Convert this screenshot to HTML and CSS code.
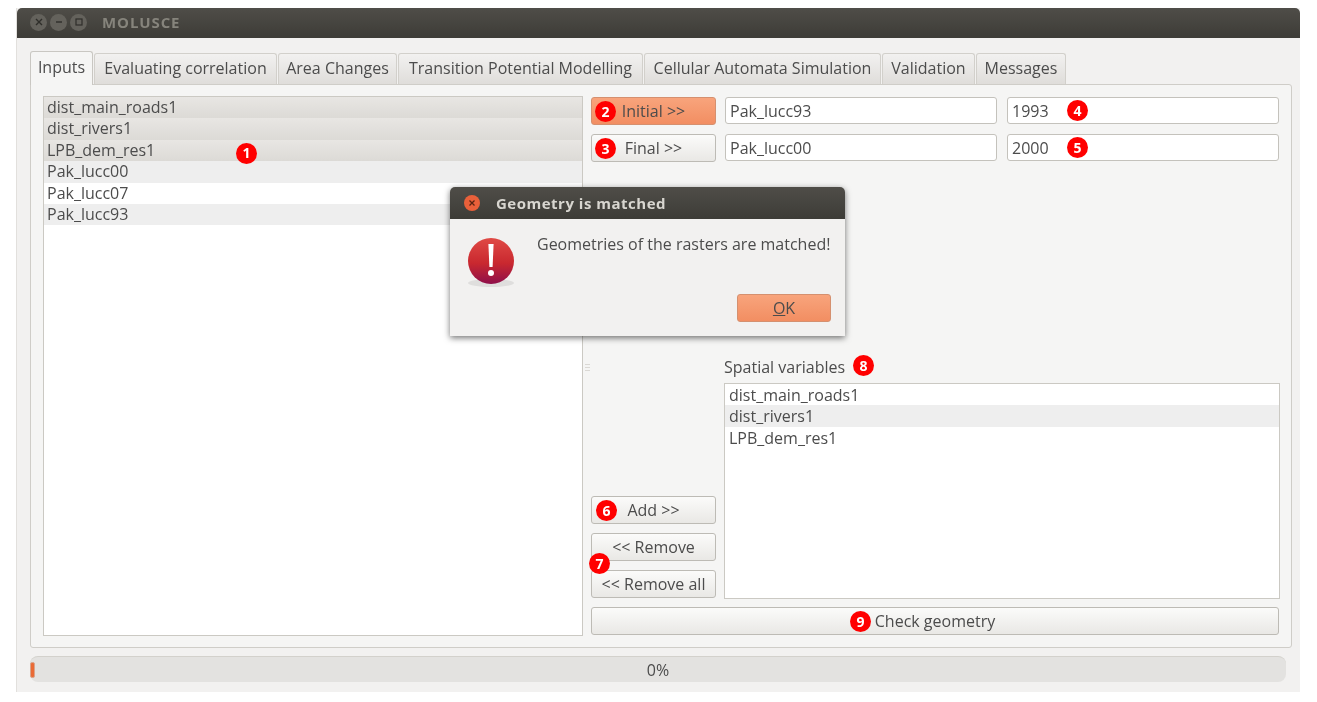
FILE: index.html
```html
<!DOCTYPE html>
<html lang="en">
<head>
  <meta charset="UTF-8">
  <title>MOLUSCE</title>
  <link rel="stylesheet" href="styles.css">
</head>
<body>
  <div class="window">
    <div class="titlebar">
      <span class="wbtn"><svg width="8" height="8" viewBox="0 0 8 8"><path d="M1 1L7 7M7 1L1 7" stroke="#2f2e2a" stroke-width="1.4"/></svg></span>
      <span class="wbtn"><svg width="8" height="8" viewBox="0 0 8 8"><path d="M1 4H7" stroke="#2f2e2a" stroke-width="1.4"/></svg></span>
      <span class="wbtn"><svg width="8" height="8" viewBox="0 0 8 8"><rect x="1" y="1" width="6" height="6" fill="none" stroke="#2f2e2a" stroke-width="1.2"/></svg></span>
      <span class="wtitle">MOLUSCE</span>
    </div>

    <div class="content">
      <div class="tabs">
        <div class="tab active tab-inputs">Inputs</div>
        <div class="tab tab-corr">Evaluating correlation</div>
        <div class="tab tab-area">Area Changes</div>
        <div class="tab tab-trans">Transition Potential Modelling</div>
        <div class="tab tab-ca">Cellular Automata Simulation</div>
        <div class="tab tab-valid">Validation</div>
        <div class="tab tab-msg">Messages</div>
      </div>

      <div class="pane">
        <div class="list layers">
          <div class="row sel">dist_main_roads1</div>
          <div class="row sel">dist_rivers1</div>
          <div class="row sel">LPB_dem_res1<span class="badge b1">1</span></div>
          <div class="row alt">Pak_lucc00</div>
          <div class="row">Pak_lucc07</div>
          <div class="row alt">Pak_lucc93</div>
        </div>

        <div class="grip"><span class="grip-dots"></span></div>

        <div class="right">
          <div class="pick">
            <button class="btn hot"><span class="badge b2">2</span>Initial &gt;&gt;</button>
            <div class="field">Pak_lucc93</div>
            <div class="field">1993<span class="badge b4">4</span></div>
          </div>
          <div class="pick">
            <button class="btn"><span class="badge b2">3</span>Final &gt;&gt;</button>
            <div class="field">Pak_lucc00</div>
            <div class="field">2000<span class="badge b4">5</span></div>
          </div>

          <div class="vars">
            <div class="var-buttons">
              <button class="btn"><span class="badge b6">6</span>Add &gt;&gt;</button>
              <button class="btn">&lt;&lt; Remove</button>
              <button class="btn">&lt;&lt; Remove all<span class="badge b7">7</span></button>
            </div>
            <div class="var-col">
              <div class="var-label">Spatial variables<span class="badge b8">8</span></div>
              <div class="list var-list">
                <div class="row">dist_main_roads1</div>
                <div class="row alt">dist_rivers1</div>
                <div class="row">LPB_dem_res1</div>
              </div>
            </div>
          </div>

          <button class="btn check"><span class="badge b9">9</span>Check geometry</button>
        </div>
      </div>

      <div class="progress">
        <span class="chunk"></span>
        0%
      </div>
    </div>

    <div class="dialog">
      <div class="dlg-title">
        <span class="dlg-close"><svg width="8" height="8" viewBox="0 0 8 8"><path d="M1.5 1.5L6.5 6.5M6.5 1.5L1.5 6.5" stroke="#5a2412" stroke-width="1.3"/></svg></span>
        <span class="dlg-name">Geometry is matched</span>
      </div>
      <div class="dlg-body">
        <svg class="dlg-icon" width="52" height="54" viewBox="0 0 52 54">
          <defs>
            <linearGradient id="err" x1="0" y1="0" x2="0" y2="1">
              <stop offset="0" stop-color="#e04a45"/>
              <stop offset="0.55" stop-color="#c9282f"/>
              <stop offset="1" stop-color="#8f0f4a"/>
            </linearGradient>
          </defs>
          <ellipse cx="26" cy="47" rx="23" ry="4" fill="#000" opacity="0.08"/>
          <circle cx="26" cy="25" r="23" fill="url(#err)"/>
          <path d="M23.4 8H28.6L27.6 31H24.4Z" fill="#fff"/>
          <circle cx="26" cy="37" r="3" fill="#fff"/>
        </svg>
        <div class="dlg-text">Geometries of the rasters are matched!</div>
      </div>
      <div class="dlg-foot">
        <button class="btn hot ok"><u>O</u>K</button>
      </div>
    </div>
  </div>
</body>
</html>
```

FILE: styles.css
```css
* {
  box-sizing: border-box;
}

body {
  margin: 0;
  background: #fff;
  font-family: "Open Sans", "Noto Sans", sans-serif;
  font-size: 16px;
  color: #4c4c4c;
}

.window {
  position: relative;
  width: 1284px;
  height: 684px;
  margin: 8px 0 0 16px;
  background: #f2f1f0;
  border-left: 1px solid #e2e0dd;
  filter: blur(0.5px);
}

.titlebar {
  display: flex;
  align-items: center;
  height: 30px;
  padding: 0 0 2px 13px;
  gap: 3px;
  background: linear-gradient(#4f4d48, #3d3c37);
  border-radius: 5px 5px 0 0;
}

.wbtn {
  display: flex;
  align-items: center;
  justify-content: center;
  width: 17px;
  height: 17px;
  border-radius: 50%;
  background: #64625c;
}

.wtitle {
  margin: -1px 0 0 12px;
  font-weight: bold;
  font-size: 15px;
  letter-spacing: 0.9px;
  color: #86847c;
}

.content {
  padding: 13px 0 0 13px;
}

.tabs {
  display: flex;
  align-items: flex-end;
  height: 33px;
}

.tab {
  display: flex;
  align-items: center;
  justify-content: center;
  height: 31px;
  margin-right: 1px;
  padding-bottom: 2px;
  background: linear-gradient(#f2f1f0, #dfdddA);
  border: 1px solid #d2d0cb;
  border-bottom: none;
  border-radius: 3px 3px 0 0;
  white-space: nowrap;
}

.tab.active {
  height: 34px;
  margin-bottom: -1px;
  padding-bottom: 3px;
  background: #f5f5f4;
  border-color: #c9c7c2;
  position: relative;
  z-index: 1;
}

.tab-inputs { width: 63px; }
.tab-corr { width: 183px; }
.tab-area { width: 119px; }
.tab-trans { width: 245px; }
.tab-ca { width: 237px; }
.tab-valid { width: 93px; }
.tab-msg { width: 90px; }

.pane {
  display: flex;
  width: 1262px;
  height: 564px;
  padding: 11px 13px 11px 12px;
  background: #f5f5f4;
  border: 1px solid #cfcdc8;
  border-radius: 0 3px 3px 3px;
}

.list {
  background: #fff;
  border: 1px solid #cbc9c3;
}

.layers {
  position: relative;
  flex: none;
  width: 540px;
  height: 540px;
}

.row {
  position: relative;
  height: 21.4px;
  line-height: 21px;
  padding-left: 3px;
  white-space: nowrap;
}

.row.sel {
  background: linear-gradient(#e8e6e3, #dcdad6);
}

.row.alt {
  background: #eeeeee;
}

.var-list .row {
  padding-left: 4px;
  line-height: 22px;
}

.grip {
  display: flex;
  align-items: center;
  justify-content: center;
  flex: none;
  width: 8px;
  padding-top: 2px;
}

.grip-dots {
  width: 5px;
  height: 7px;
  border-top: 1px solid #dad8d4;
  border-bottom: 1px solid #dad8d4;
  background: linear-gradient(#dad8d4, #dad8d4) center / 100% 1px no-repeat;
}

.right {
  display: flex;
  flex-direction: column;
  flex: none;
  width: 688px;
  padding-bottom: 1px;
}

.pick {
  display: flex;
  gap: 10px;
  height: 27px;
  margin-top: 1px;
  margin-bottom: 9px;
}

.pick .btn {
  margin-right: -1px;
}

.btn {
  position: relative;
  display: flex;
  align-items: center;
  justify-content: center;
  flex: none;
  width: 125px;
  height: 28px;
  padding: 0 0 1px;
  background: linear-gradient(#fbfbfa, #e9e8e5);
  border: 1px solid #bdbbb5;
  border-radius: 3px;
  font: inherit;
  color: inherit;
}

.btn.hot {
  background: linear-gradient(#f8a47c, #f28e62);
  border-color: #d5906f;
}

.field {
  position: relative;
  flex: none;
  width: 272px;
  height: 27px;
  line-height: 26px;
  padding-left: 4px;
  background: #fff;
  border: 1px solid #c4c2bc;
  border-radius: 3px;
}

.vars {
  display: flex;
  flex: 1;
  align-items: flex-end;
  gap: 8px;
}

.var-buttons {
  display: flex;
  flex-direction: column;
  gap: 9px;
  padding-bottom: 1px;
}

.var-col {
  flex: 1;
}

.var-label {
  position: relative;
  height: 25px;
  line-height: 18px;
}

.var-list {
  width: 556px;
  height: 216px;
}

.check {
  width: 688px;
  margin-top: 8px;
}

.badge {
  position: absolute;
  display: flex;
  align-items: center;
  justify-content: center;
  width: 21px;
  height: 21px;
  border-radius: 50%;
  background: #f00;
  color: #fff;
  font-weight: bold;
  font-size: 14px;
  line-height: 1;
  z-index: 2;
}

.b1 { left: 192px; top: 3px; }
.b2 { left: 3px; top: 3px; }
.b4 { left: 59px; top: 2px; }
.b6 { left: 4px; top: 3px; }
.b7 { left: -3px; top: -18px; }
.b8 { left: 129px; top: -3px; }
.b9 { left: 258px; top: 3px; }

.progress {
  position: relative;
  display: flex;
  align-items: center;
  justify-content: center;
  width: 1256px;
  height: 26px;
  margin-top: 8px;
  background: #e3e2e0;
  border-top: 1px solid #d3d1cc;
  border-radius: 8px;
}

.chunk {
  position: absolute;
  left: 0;
  top: 5px;
  width: 5px;
  height: 16px;
  background: #ea6a35;
  border: 1px solid #d9a58c;
  border-radius: 2px;
}

.dialog {
  position: absolute;
  left: 433px;
  top: 179px;
  width: 395px;
  height: 149px;
  background: #f2f1f0;
  border-radius: 5px 5px 0 0;
  box-shadow: 0 2px 6px rgba(0, 0, 0, 0.55);
  z-index: 5;
}

.dlg-title {
  display: flex;
  align-items: center;
  height: 32px;
  padding-left: 14px;
  background: linear-gradient(#4f4d48, #3d3c37);
  border-radius: 5px 5px 0 0;
}

.dlg-close {
  display: flex;
  align-items: center;
  justify-content: center;
  width: 16px;
  height: 16px;
  border-radius: 50%;
  background: #e9603a;
}

.dlg-name {
  margin-left: 16px;
  font-weight: bold;
  font-size: 15px;
  letter-spacing: 0.5px;
  color: #d8d6d0;
}

.dlg-body {
  display: flex;
  height: 75px;
}

.dlg-icon {
  margin: 17px 0 0 15px;
}

.dlg-text {
  margin: 14px 0 0 20px;
  white-space: nowrap;
}

.dlg-foot {
  display: flex;
  justify-content: flex-end;
  padding-right: 14px;
}

.ok {
  width: 94px;
}
```
